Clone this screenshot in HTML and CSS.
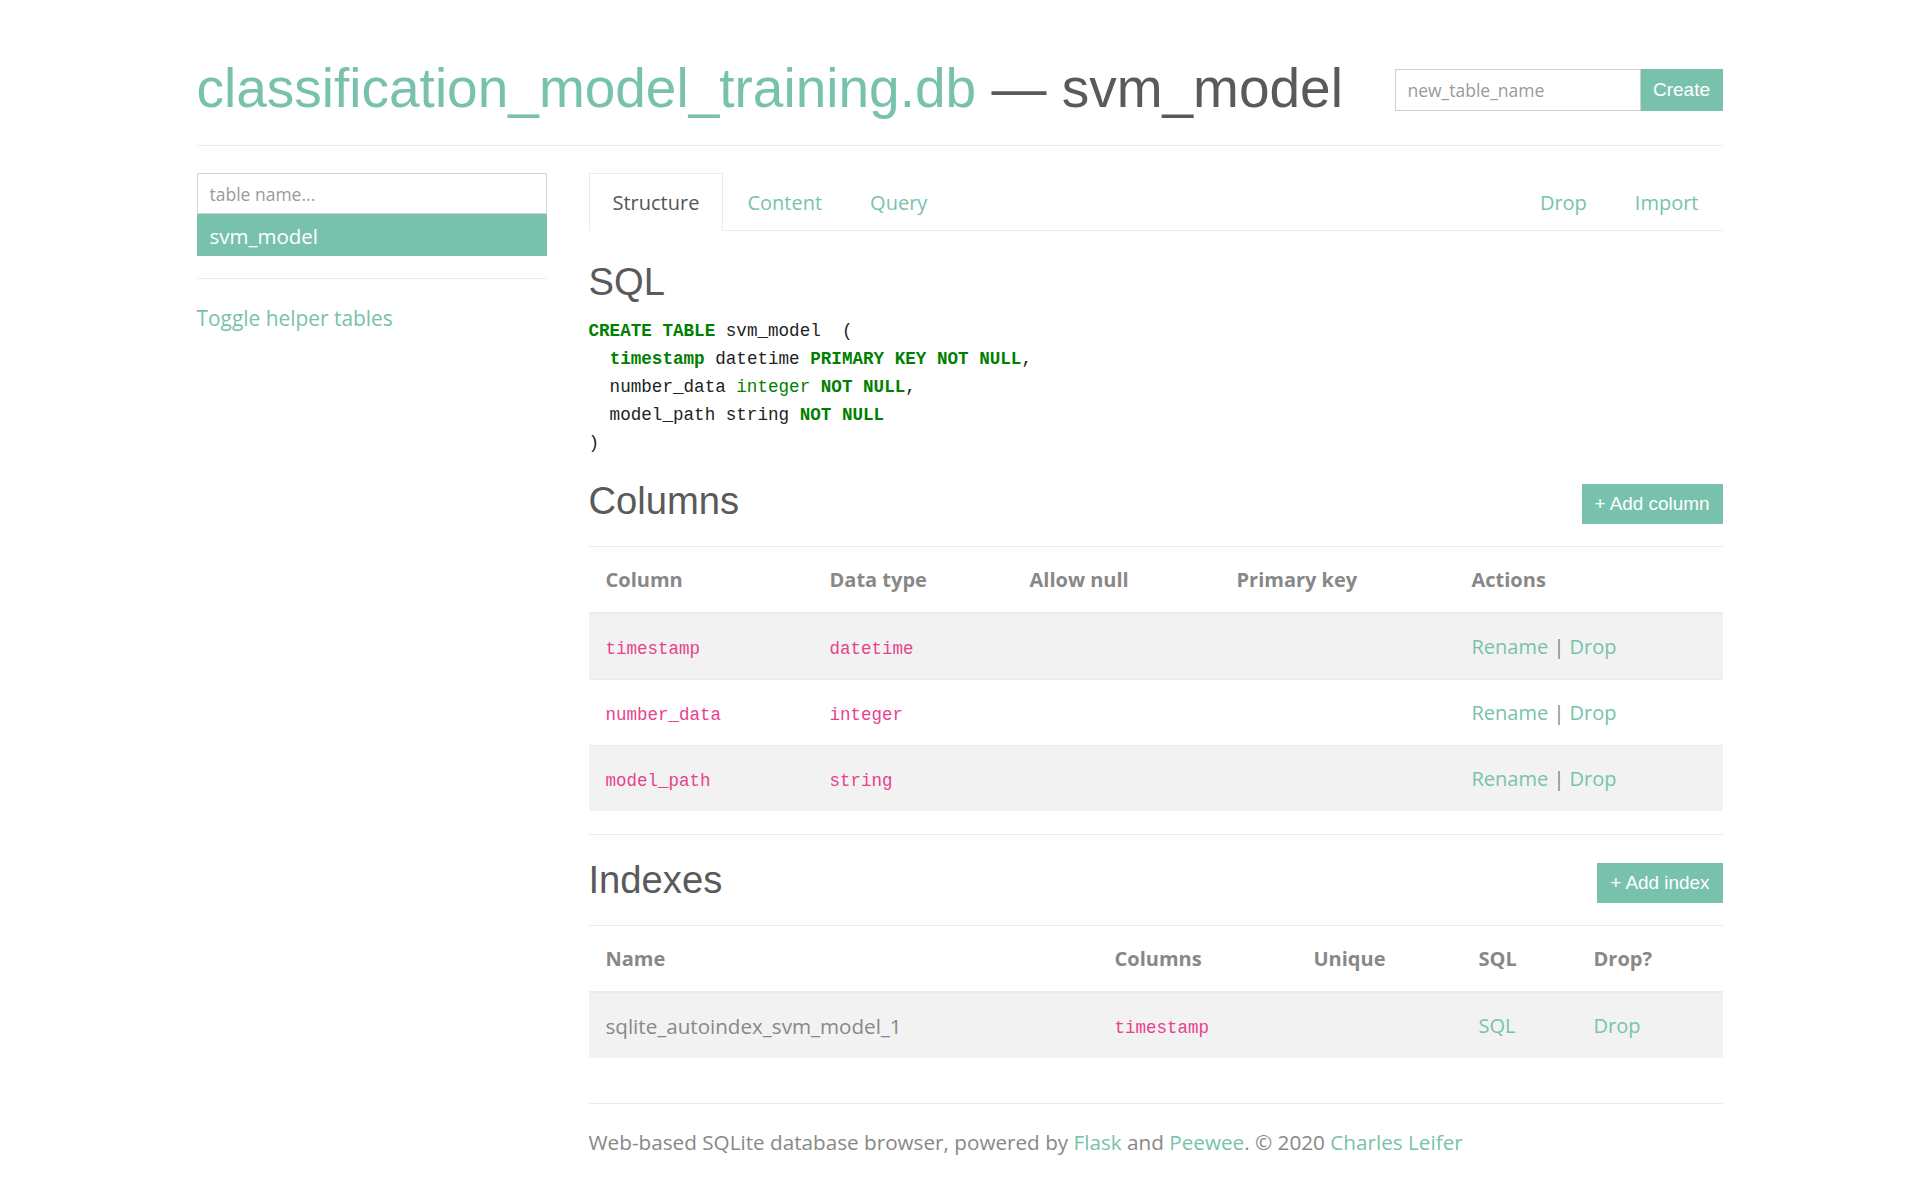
FILE: index.html
```html
<!DOCTYPE html>
<html lang="en">
<head>
<meta charset="utf-8">
<title>svm_model - classification_model_training.db</title>
<link rel="stylesheet" href="styles.css">
</head>
<body>
<div class="container">
  <header class="page-header">
    <h1 class="title"><span class="db-name">classification_model_training.db</span> — svm_model</h1>
    <form class="create-form">
      <input class="create-input" type="text" placeholder="new_table_name">
      <button class="create-btn" type="button">Create</button>
    </form>
  </header>
  <hr class="rule rule-top">
  <div class="layout">
    <aside class="sidebar">
      <input class="search" type="text" placeholder="table name...">
      <ul class="table-list">
        <li class="table-item">svm_model</li>
      </ul>
      <hr class="rule rule-side">
      <a class="toggle" href="#">Toggle helper tables</a>
    </aside>
    <main class="main">
      <nav class="tabs">
        <a class="tab tab-active" href="#">Structure</a>
        <a class="tab" href="#">Content</a>
        <a class="tab" href="#">Query</a>
        <a class="tab tab-push" href="#">Drop</a>
        <a class="tab" href="#">Import</a>
      </nav>

      <h2 class="section-title sql-title">SQL</h2>
<pre class="sql"><span class="kw">CREATE TABLE</span> svm_model  (
  <span class="kw">timestamp</span> datetime <span class="kw">PRIMARY KEY NOT NULL</span>,
  number_data <span class="ty">integer</span> <span class="kw">NOT NULL</span>,
  model_path string <span class="kw">NOT NULL</span>
)</pre>

      <div class="section-head">
        <h2 class="section-title">Columns</h2>
        <a class="btn" href="#">+ Add column</a>
      </div>
      <table class="data-table columns-table">
        <colgroup>
          <col class="c-col1"><col class="c-col2"><col class="c-col3"><col class="c-col4"><col class="c-col5">
        </colgroup>
        <thead>
          <tr><th>Column</th><th>Data type</th><th>Allow null</th><th>Primary key</th><th>Actions</th></tr>
        </thead>
        <tbody>
          <tr><td><code>timestamp</code></td><td><code>datetime</code></td><td></td><td></td><td><a href="#">Rename</a> | <a href="#">Drop</a></td></tr>
          <tr><td><code>number_data</code></td><td><code>integer</code></td><td></td><td></td><td><a href="#">Rename</a> | <a href="#">Drop</a></td></tr>
          <tr><td><code>model_path</code></td><td><code>string</code></td><td></td><td></td><td><a href="#">Rename</a> | <a href="#">Drop</a></td></tr>
        </tbody>
      </table>
      <hr class="rule rule-mid">

      <div class="section-head">
        <h2 class="section-title">Indexes</h2>
        <a class="btn" href="#">+ Add index</a>
      </div>
      <table class="data-table index-table">
        <colgroup>
          <col class="i-col1"><col class="i-col2"><col class="i-col3"><col class="i-col4"><col class="i-col5">
        </colgroup>
        <thead>
          <tr><th>Name</th><th>Columns</th><th>Unique</th><th>SQL</th><th>Drop?</th></tr>
        </thead>
        <tbody>
          <tr><td class="index-name">sqlite_autoindex_svm_model_1</td><td><code>timestamp</code></td><td></td><td><a href="#">SQL</a></td><td><a href="#">Drop</a></td></tr>
        </tbody>
      </table>
      <hr class="rule rule-foot">
      <footer class="footer">Web-based SQLite database browser, powered by <a href="#">Flask</a> and <a href="#">Peewee</a>. © 2020 <a href="#">Charles Leifer</a></footer>
    </main>
  </div>
</div>
</body>
</html>
```
FILE: styles.css
```css
html, body {
  margin: 0;
  padding: 0;
  background: #ffffff;
}

body {
  font-family: "Open Sans", "Noto Sans", sans-serif;
  font-size: 20px;
  line-height: 30px;
  color: #888888;
}

a {
  color: #78c2ad;
  text-decoration: none;
}

.container {
  width: 1526px;
  margin: 0 auto;
  padding-bottom: 8px;
}

/* header */
.page-header {
  display: flex;
  justify-content: space-between;
  align-items: flex-start;
  padding-top: 55px;
}

.title {
  margin: 0;
  font-family: "Liberation Sans", Arial, sans-serif;
  font-weight: 400;
  font-size: 55px;
  line-height: 66px;
  color: #5a5a5a;
  white-space: nowrap;
}

.db-name {
  color: #78c2ad;
}

.create-form {
  display: flex;
  margin: 14px 0 0;
}

.create-input {
  box-sizing: border-box;
  width: 246px;
  height: 42px;
  margin: 0;
  padding: 0 12px;
  border: 1px solid #cfcfcf;
  border-radius: 0;
  font-family: "Open Sans", sans-serif;
  font-size: 17.5px;
  color: #555;
  outline: none;
}

.create-input::placeholder,
.search::placeholder {
  color: #9a9a9a;
}

.create-btn {
  width: 82px;
  height: 42px;
  margin: 0;
  border: 0;
  border-radius: 0;
  background: #78c2ad;
  color: #ffffff;
  font-family: "Liberation Sans", Arial, sans-serif;
  font-size: 19px;
}

/* rules */
.rule {
  height: 0;
  border: 0;
  border-top: 1px solid #ebebeb;
  margin: 0;
}

.rule-top {
  margin-top: 24px;
}

.rule-side {
  margin-top: 22px;
}

.rule-mid {
  margin-top: 23px;
}

.rule-foot {
  margin-top: 45px;
}

/* layout */
.layout {
  display: grid;
  grid-template-columns: 350px 1fr;
  column-gap: 42px;
  margin-top: 27px;
}

/* sidebar */
.search {
  display: block;
  box-sizing: border-box;
  width: 100%;
  height: 41px;
  margin: 0;
  padding: 0 12px;
  border: 1px solid #d4d4d4;
  border-radius: 0;
  font-family: "Open Sans", sans-serif;
  font-size: 17.5px;
  color: #555;
  outline: none;
}

.table-list {
  list-style: none;
  margin: 0;
  padding: 0;
}

.table-item {
  box-sizing: border-box;
  height: 42px;
  line-height: 41px;
  padding: 2px 13px 0;
  background: #78c2ad;
  color: #ffffff;
  font-size: 20.5px;
}

.toggle {
  display: block;
  margin-top: 24px;
  font-size: 20.9px;
}

/* tabs */
.tabs {
  display: flex;
  border-bottom: 1px solid #ececec;
}

.tab {
  padding: 14px 23px 12px;
  line-height: 30px;
  border: 1px solid transparent;
  border-bottom: 0;
  color: #78c2ad;
}

.tab-active {
  border-color: #ececec;
  background: #ffffff;
  color: #555555;
  margin-bottom: -1px;
  padding-bottom: 13px;
}

.tab-push {
  margin-left: auto;
}

/* sections */
.section-title {
  margin: 0;
  font-family: "Liberation Sans", Arial, sans-serif;
  font-weight: 400;
  font-size: 38.2px;
  line-height: 45px;
  color: #5a5a5a;
}

.sql-title {
  margin-top: 28px;
}

.sql {
  margin: 13px 0 0;
  font-family: "Liberation Mono", "DejaVu Sans Mono", monospace;
  font-size: 17.6px;
  line-height: 28px;
  color: #222222;
}

.kw {
  color: #008000;
  font-weight: 700;
}

.ty {
  color: #008000;
}

.section-head {
  display: flex;
  justify-content: space-between;
  align-items: flex-end;
  margin-top: 21px;
}

.rule-mid + .section-head {
  margin-top: 22px;
}

.btn {
  display: inline-block;
  padding: 6px 13px;
  background: #78c2ad;
  color: #ffffff;
  font-family: "Liberation Sans", Arial, sans-serif;
  font-size: 18.9px;
  line-height: 28px;
  margin-bottom: -1px;
}

/* tables */
.data-table {
  width: 100%;
  border-collapse: collapse;
  table-layout: fixed;
  margin-top: 23px;
}

.data-table th,
.data-table td {
  text-align: left;
  vertical-align: middle;
  padding: 17.5px 17px;
  line-height: 30px;
  border-top: 1px solid #ececec;
}

.data-table th {
  font-weight: 700;
  color: #888888;
  padding: 18px 17px 17px;
  border-bottom: 2px solid #ececec;
}

.data-table tbody tr:nth-child(odd) {
  background: #f2f2f2;
}

.data-table code {
  font-family: "Liberation Mono", "DejaVu Sans Mono", monospace;
  font-size: 17.5px;
  line-height: 1;
  color: #e8418c;
}

.index-name {
  font-size: 20.6px;
}

.c-col1 { width: 224px; }
.c-col2 { width: 200px; }
.c-col3 { width: 207px; }
.c-col4 { width: 235px; }
.c-col5 { width: 268px; }

.i-col1 { width: 509px; }
.i-col2 { width: 199px; }
.i-col3 { width: 165px; }
.i-col4 { width: 115px; }
.i-col5 { width: 146px; }

/* footer */
.footer {
  margin-top: 23px;
  font-size: 20.7px;
  color: #888888;
}
```
